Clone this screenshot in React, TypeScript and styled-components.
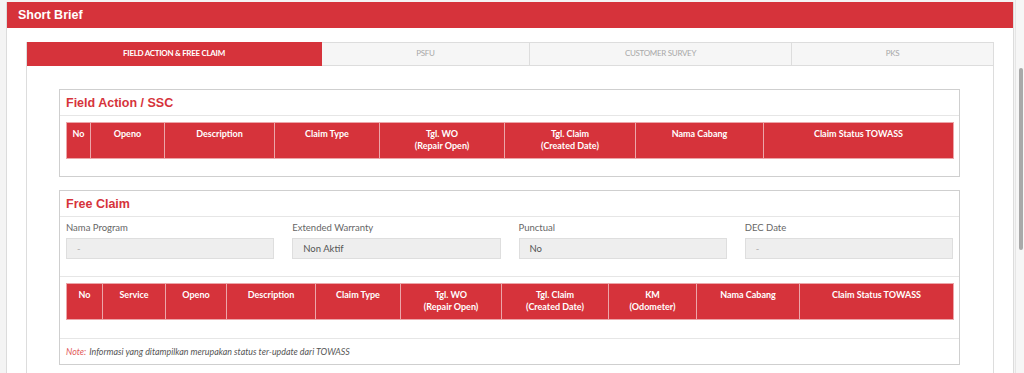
import React from "react";
import styled, { createGlobalStyle } from "styled-components";

const RED = "#d6333b";

const Global = createGlobalStyle`
  html, body { margin: 0; padding: 0; }
  body {
    background: #f4f4f4;
    font-family: Lato, "Open Sans", Arial, sans-serif;
    color: #555;
  }
  * { box-sizing: border-box; }
`;

const Page = styled.div`
  width: 1024px;
  height: 373px;
  display: flex;
  overflow: hidden;
`;
const Main = styled.div`
  flex: 1;
  padding: 2px 1px 0 6px;
`;
const Panel = styled.div`
  background: #fff;
  border-left: 1px solid #dcdcdc;
  border-right: 1px solid #dcdcdc;
  height: 100%;
`;
const PanelHeader = styled.div`
  height: 26px;
  background: ${RED};
  color: #fff;
  font-family: "Liberation Sans", Arial, sans-serif;
  font-weight: bold;
  font-size: 12.5px;
  display: flex;
  align-items: center;
  padding-left: 11px;
`;
const PanelBody = styled.div`
  padding: 14px 19px 0 19px;
`;
const TabBar = styled.div`
  display: flex;
  height: 24px;
  border-left: 1px solid #dddddd;
`;
const Tab = styled.div<{ $w: number; $active?: boolean }>`
  width: ${(p) => p.$w}px;
  height: 24px;
  display: flex;
  justify-content: center;
  padding-top: 5px;
  font-size: 8px;
  letter-spacing: -0.3px;
  text-transform: uppercase;
  background: ${(p) => (p.$active ? RED : "#f6f6f6")};
  color: ${(p) => (p.$active ? "#fff" : "#a8a8a8")};
  font-weight: ${(p) => (p.$active ? 700 : 400)};
  border: 1px solid ${(p) => (p.$active ? RED : "#dddddd")};
  border-left: none;
`;
const TabContent = styled.div`
  border: 1px solid #dddddd;
  border-top: none;
  padding: 23px 33px 40px 32px;
  display: flex;
  flex-direction: column;
  gap: 13px;
`;
const Box = styled.div`
  border: 1px solid #cfcfcf;
  background: #fff;
`;
const BoxTitle = styled.div`
  height: 26px;
  border-bottom: 1px solid #e6e6e6;
  padding-left: 6px;
  display: flex;
  align-items: center;
  color: ${RED};
  font-family: "Liberation Sans", Arial, sans-serif;
  font-weight: bold;
  font-size: 12.5px;
`;
const TableWrap = styled.div<{ $bottom: number }>`
  padding: 6px 5px ${(p) => p.$bottom}px 6px;
`;
const Divided = styled.div`
  border-bottom: 1px solid #e6e6e6;
`;
const Table = styled.table`
  width: 100%;
  border-collapse: collapse;
  table-layout: fixed;
`;
const Th = styled.th`
  background: ${RED};
  color: #fff;
  font-size: 9px;
  font-weight: 700;
  line-height: 12px;
  height: 36px;
  vertical-align: top;
  padding: 5px 2px 0;
  text-align: center;
  border: 1px solid #eca6a9;
`;
const Form = styled.div`
  display: grid;
  grid-template-columns: repeat(4, 1fr);
  column-gap: 18px;
  padding: 4px 6px 17px 6px;
  border-bottom: 1px solid #e6e6e6;
`;
const Field = styled.div`
  display: flex;
  flex-direction: column;
`;
const Label = styled.div`
  font-size: 9.5px;
  color: #666;
  line-height: 14px;
  height: 17px;
`;
const Input = styled.div<{ $empty?: boolean }>`
  height: 21px;
  background: #eeeeee;
  border: 1px solid #dedede;
  padding-left: 10px;
  display: flex;
  align-items: center;
  font-size: 9.5px;
  color: ${(p) => (p.$empty ? "#aaa" : "#555")};
`;
const Note = styled.div`
  height: 25px;
  padding-left: 6px;
  display: flex;
  align-items: center;
  font-size: 8.9px;
  font-style: italic;
  color: #555;
`;
const NoteKey = styled.span`
  color: #e25b5b;
  margin-right: 3px;
`;
const ScrollTrack = styled.div`
  width: 10px;
  background: #f6f6f6;
  border-left: 1px solid #e6e6e6;
  display: flex;
  justify-content: flex-end;
  padding-right: 1px;
`;
const Thumb = styled.div`
  width: 4px;
  height: 182px;
  margin-top: 68px;
  background: #a9a9a9;
  border-radius: 2px;
`;

type Col = { w: number; label: React.ReactNode };

const fieldCols: Col[] = [
  { w: 24, label: "No" },
  { w: 74, label: "Openo" },
  { w: 110, label: "Description" },
  { w: 105, label: "Claim Type" },
  { w: 125, label: <>Tgl. WO<br />(Repair Open)</> },
  { w: 131, label: <>Tgl. Claim<br />(Created Date)</> },
  { w: 128, label: "Nama Cabang" },
  { w: 190, label: "Claim Status TOWASS" },
];

const freeCols: Col[] = [
  { w: 36, label: "No" },
  { w: 63, label: "Service" },
  { w: 61, label: "Openo" },
  { w: 89, label: "Description" },
  { w: 85, label: "Claim Type" },
  { w: 101, label: <>Tgl. WO<br />(Repair Open)</> },
  { w: 107, label: <>Tgl. Claim<br />(Created Date)</> },
  { w: 88, label: <>KM<br />(Odometer)</> },
  { w: 103, label: "Nama Cabang" },
  { w: 154, label: "Claim Status TOWASS" },
];

const HeadTable = ({ cols }: { cols: Col[] }) => (
  <Table>
    <colgroup>
      {cols.map((c, i) => (
        <col key={i} style={{ width: c.w }} />
      ))}
    </colgroup>
    <thead>
      <tr>
        {cols.map((c, i) => (
          <Th key={i}>{c.label}</Th>
        ))}
      </tr>
    </thead>
  </Table>
);

const fields = [
  { label: "Nama Program", value: "-", empty: true },
  { label: "Extended Warranty", value: "Non Aktif" },
  { label: "Punctual", value: "No" },
  { label: "DEC Date", value: "-", empty: true },
];

const App: React.FC = () => {
  return (
    <Page>
      <Global />
      <Main>
        <Panel>
          <PanelHeader>Short Brief</PanelHeader>
          <PanelBody>
            <TabBar>
              <Tab $w={295} $active>Field Action &amp; Free Claim</Tab>
              <Tab $w={208}>PSFU</Tab>
              <Tab $w={262}>Customer Survey</Tab>
              <Tab $w={202}>PKS</Tab>
            </TabBar>
            <TabContent>
              <Box>
                <BoxTitle>Field Action / SSC</BoxTitle>
                <TableWrap $bottom={17}>
                  <HeadTable cols={fieldCols} />
                </TableWrap>
              </Box>
              <Box>
                <BoxTitle>Free Claim</BoxTitle>
                <Form>
                  {fields.map((f) => (
                    <Field key={f.label}>
                      <Label>{f.label}</Label>
                      <Input $empty={f.empty}>{f.value}</Input>
                    </Field>
                  ))}
                </Form>
                <Divided>
                  <TableWrap $bottom={18}>
                    <HeadTable cols={freeCols} />
                  </TableWrap>
                </Divided>
                <Note>
                  <NoteKey>Note:</NoteKey>
                  Informasi yang ditampilkan merupakan status ter-update dari TOWASS
                </Note>
              </Box>
            </TabContent>
          </PanelBody>
        </Panel>
      </Main>
      <ScrollTrack>
        <Thumb />
      </ScrollTrack>
    </Page>
  );
};

export default App;
